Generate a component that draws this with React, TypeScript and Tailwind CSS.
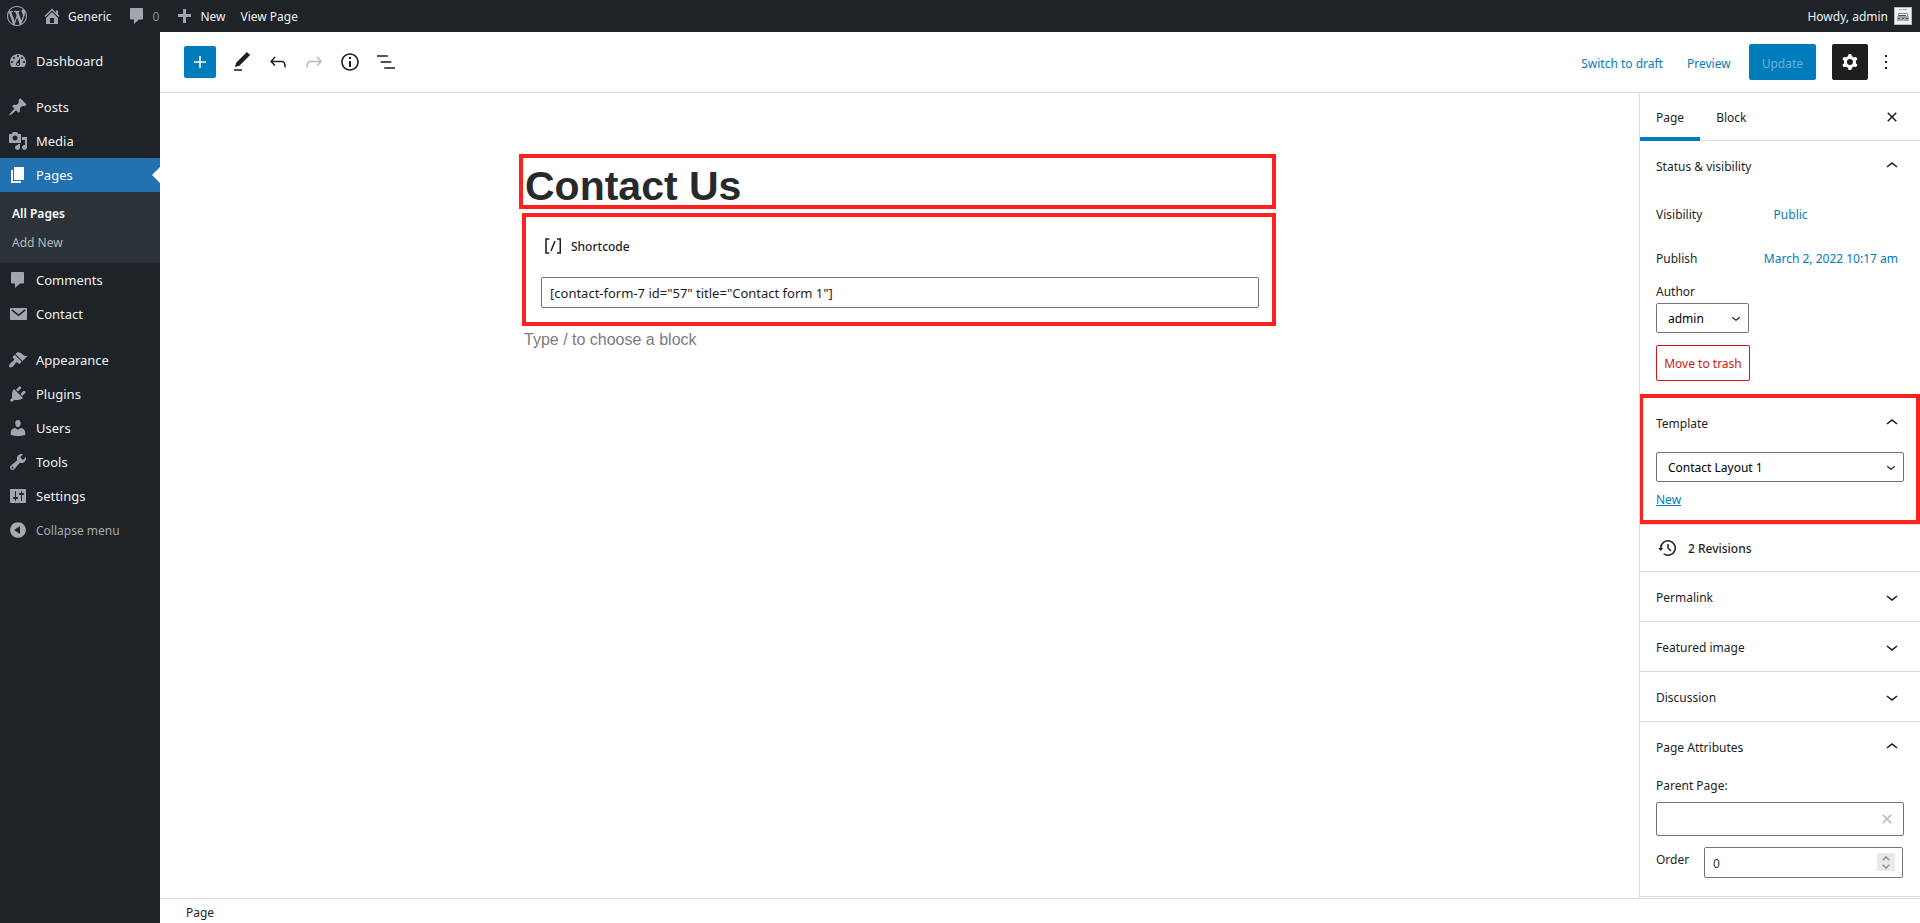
import type { ReactNode } from "react";

const dash = {
  wordpress:
    "M20 10c0-5.51-4.49-10-10-10C4.48 0 0 4.49 0 10c0 5.52 4.48 10 10 10 5.51 0 10-4.48 10-10zM7.78 15.37L4.37 6.22c.55-.02 1.17-.08 1.17-.08.5-.06.44-1.13-.06-1.11 0 0-1.45.11-2.37.11-.18 0-.37 0-.58-.01C4.12 2.69 6.87 1.11 10 1.11c2.33 0 4.45.87 6.05 2.34-.68-.11-1.65.39-1.65 1.58 0 .74.45 1.36.9 2.1.35.61.55 1.36.55 2.46 0 1.49-1.4 5-1.4 5l-3.03-8.37c.54-.02.82-.17.82-.17.5-.05.44-1.25-.06-1.22 0 0-1.44.12-2.38.12-.87 0-2.33-.12-2.33-.12-.5-.03-.56 1.2-.06 1.22l.92.08 1.26 3.41zM17.41 10c.24-.64.74-1.87.43-4.25.7 1.29 1.05 2.71 1.05 4.25 0 3.29-1.73 6.24-4.4 7.78.97-2.59 1.94-5.2 2.92-7.78zM6.1 18.09C3.12 16.65 1.11 13.53 1.11 10c0-1.3.23-2.48.72-3.59C3.25 10.3 4.67 14.2 6.1 18.09zm4.03-6.63l2.58 6.98c-.86.29-1.76.45-2.71.45-.79 0-1.57-.11-2.29-.33.81-2.38 1.62-4.74 2.42-7.1z",
  home: "M16 8.5l1.53 1.53-1.06 1.06L10 4.6l-6.47 6.49-1.06-1.06L10 2.5l4 4v-2h2v4zm-6-2.46l6 5.99V18H4v-5.97zM12 17v-5H8v5h4z",
  comments: "M4 2h11c.6 0 1 .4 1 1v9.500c0 .6-.4 1-1 1h-3L7 18v-4.500H4c-.6 0-1-.4-1-1V3c0-.6.4-1 1-1z",
  plus: "M17 8v3h-5v6H9v-6H4V8h5V3h3v5h5z",
  dashboard:
    "M3.76 16h12.48c1.1-1.37 1.76-3.11 1.76-5 0-4.42-3.58-8-8-8s-8 3.58-8 8c0 1.89.66 3.63 1.76 5zM10 4c.55 0 1 .45 1 1s-.45 1-1 1-1-.45-1-1 .45-1 1-1zM6 6c.55 0 1 .45 1 1s-.45 1-1 1-1-.45-1-1 .45-1 1-1zm8 0c.55 0 1 .45 1 1s-.45 1-1 1-1-.45-1-1 .45-1 1-1zm-5.37 5.55L12 7v6c0 1.1-.9 2-2 2s-2-.9-2-2c0-.57.24-1.08.63-1.45zM4 10c.55 0 1 .45 1 1s-.45 1-1 1-1-.45-1-1 .45-1 1-1zm12 0c.55 0 1 .45 1 1s-.45 1-1 1-1-.45-1-1 .45-1 1-1zm-5 3c0-.55-.45-1-1-1s-1 .45-1 1 .45 1 1 1 1-.45 1-1z",
  posts:
    "M10.44 3.02l1.82-1.82 6.36 6.35-1.83 1.82c-1.05-.68-2.48-.57-3.41.36l-.75.75c-.92.93-1.04 2.35-.35 3.41l-1.83 1.82-2.41-2.41-2.8 2.79c-.42.42-3.38 2.71-3.8 2.29s1.86-3.39 2.28-3.81l2.79-2.79L4.1 9.36l1.83-1.82c1.05.69 2.48.57 3.4-.36l.75-.75c.93-.92 1.05-2.35.36-3.41z",
  media:
    "M13 11V4c0-.55-.45-1-1-1h-1.67L9 1H5L3.67 3H2c-.55 0-1 .45-1 1v7c0 .55.45 1 1 1h10c.55 0 1-.45 1-1zM7 4.5c1.38 0 2.5 1.12 2.5 2.5S8.38 9.5 7 9.5 4.5 8.38 4.5 7 5.62 4.5 7 4.5zM14 6h5v10.5c0 1.38-1.12 2.5-2.5 2.5S14 17.88 14 16.5s1.12-2.5 2.5-2.5c.17 0 .34.02.5.05V9h-3V6zm-4 8.05V13h2v3.5c0 1.38-1.12 2.5-2.5 2.5S7 17.88 7 16.5 8.12 14 9.5 14c.17 0 .34.02.5.05z",
  pages: "M6 15V2h10v13H6zm-1 1h8v2H3V5h2v11z",
  email:
    "M3 4h15c.6 0 1 .4 1 1v10c0 .6-.4 1-1 1H3c-.6 0-1-.4-1-1V5c0-.6.4-1 1-1zm7.500 8.200L17.700 6.400 16.700 5.200 10.500 10.200 4.300 5.200 3.300 6.400z",
  appearance:
    "M14.48 11.06L7.41 3.99l1.5-1.5c.5-.56 2.3-.47 3.51.32 1.21.8 1.43 1.28 2.91 2.1 1.18.64 2.45 1.26 4.45.85zm-.71.71L6.7 4.7 4.93 6.47c-.39.39-.39 1.02 0 1.41l1.06 1.06c.39.39.39 1.03 0 1.42-.6.6-1.43 1.11-2.21 1.69-.35.26-.7.53-1.01.84C1.43 14.23.4 16.08 1.4 17.07c.99 1 2.84-.03 4.18-1.36.31-.31.58-.66.85-1.02.57-.78 1.08-1.61 1.69-2.21.39-.39 1.02-.39 1.41 0l1.06 1.06c.39.39 1.02.39 1.41 0z",
  plugins:
    "M13.11 4.36L9.87 7.6 8 5.73l3.24-3.24c.35-.34 1.05-.2 1.56.32.52.51.66 1.21.31 1.55zm-8 1.77l.91-1.12 9.01 9.01-1.19.84c-.71.71-2.63 1.16-3.82 1.16H6.14L4.9 17.26c-.59.59-1.54.59-2.12 0-.59-.58-.59-1.53 0-2.12l1.24-1.24v-3.88c0-1.13.4-3.19 1.09-3.89zm7.26 3.97l3.24-3.24c.34-.35 1.04-.21 1.55.31.52.51.66 1.21.31 1.55l-3.24 3.25z",
  users:
    "M10 9.25c-2.27 0-2.73-3.44-2.73-3.44C7 4.02 7.82 2 9.97 2c2.16 0 2.98 2.02 2.71 3.81 0 0-.41 3.44-2.68 3.44zm0 2.57L12.72 10c2.39 0 4.52 2.33 4.52 4.53v2.49s-3.65 1.13-7.24 1.13c-3.65 0-7.24-1.13-7.24-1.13v-2.49c0-2.25 1.94-4.48 4.47-4.48z",
  tools:
    "M16.68 9.77c-1.34 1.34-3.3 1.67-4.95.99l-5.41 6.52c-.99.99-2.59.99-3.58 0s-.99-2.59 0-3.57l6.52-5.42c-.68-1.65-.35-3.61.99-4.95 1.28-1.28 3.12-1.62 4.72-1.06l-2.89 2.89 2.82 2.82 2.86-2.87c.53 1.58.18 3.39-1.08 4.65zM3.81 16.21c.4.39 1.04.39 1.43 0 .4-.4.4-1.04 0-1.43-.39-.4-1.03-.4-1.43 0-.39.39-.39 1.03 0 1.43z",
  settings:
    "M18 16V4c0-.55-.45-1-1-1H3c-.55 0-1 .45-1 1v12c0 .55.45 1 1 1h14c.55 0 1-.45 1-1zM8 11h1c.55 0 1 .45 1 1s-.45 1-1 1H8v1.5c0 .28-.22.5-.5.5s-.5-.22-.5-.5V13H6c-.55 0-1-.45-1-1s.45-1 1-1h1V5.5c0-.28.22-.5.5-.5s.5.22.5.5V11zm5-2h-1c-.55 0-1-.45-1-1s.45-1 1-1h1V5.5c0-.28.22-.5.5-.5s.5.22.5.5V7h1c.55 0 1 .45 1 1s-.45 1-1 1h-1v5.5c0 .28-.22.5-.5.5s-.5-.22-.5-.5V9z",
  collapse:
    "M10 2.160c4.330 0 7.840 3.510 7.840 7.840s-3.510 7.840-7.840 7.840S2.160 14.330 2.160 10 5.670 2.160 10 2.160zm2 11.720V6.120L6.180 10z",
};

const block = {
  plus: "M18 11.2h-5.2V6h-1.6v5.2H6v1.6h5.2V18h1.6v-5.2H18z",
  edit: "M20.1 5.1L16.9 2 6.2 12.7l-1.3 4.4 4.5-1.3L20.1 5.1zM4 20.8h8v-1.5H4v1.5z",
  undo: "M18.3 11.7c-.6-.6-1.4-.9-2.3-.9H6.7l2.9-3.3-1.1-1-4.5 5L8.500 16l1-1-2.7-2.7H16c.5 0 .9.2 1.3.5 1 1 1 3.400 1 4.500v.3h1.5v-.2c0-1.500 0-4.300-1.500-5.700z",
  redo: "M15.600 6.500l-1.100 1 2.900 3.300H8c-.9 0-1.700.3-2.300.9-1.400 1.500-1.400 4.200-1.400 5.600v.2h1.500v-.3c0-1.100 0-3.500 1-4.500.3-.3.7-.5 1.300-.5h9.200L14.500 15l1.100 1.100 4.600-4.600-4.600-5z",
  info: "M12 3.200c-4.800 0-8.800 3.900-8.800 8.800 0 4.800 3.900 8.800 8.800 8.800 4.800 0 8.800-3.900 8.800-8.800 0-4.800-4-8.800-8.800-8.800zm0 16c-4 0-7.200-3.300-7.200-7.200C4.800 8 8 4.800 12 4.800s7.200 3.300 7.200 7.200c0 4-3.200 7.200-7.200 7.200zM11 17h2v-6h-2v6zm0-8h2V7h-2v2z",
  list: "M13.800 5.200H3v1.500h10.800V5.200zm-3.600 12v1.500H21v-1.500H10.200zm7.200-6H6.600v1.500h10.800v-1.500z",
  cog: "M10.289 4.836A1 1 0 0111.275 4h1.306a1 1 0 01.987.836l.244 1.466c.787.26 1.503.679 2.108 1.218l1.393-.522a1 1 0 011.216.437l.653 1.130a1 1 0 01-.23 1.273l-1.148.944a6.025 6.025 0 010 2.435l1.149.946a1 1 0 01.23 1.272l-.653 1.130a1 1 0 01-1.216.437l-1.394-.522c-.605.540-1.320.958-2.108 1.218l-.244 1.466a1 1 0 01-.987.836h-1.306a1 1 0 01-.986-.836l-.244-1.466a5.995 5.995 0 01-2.108-1.218l-1.394.522a1 1 0 01-1.217-.436l-.653-1.131a1 1 0 01.23-1.272l1.149-.946a6.026 6.026 0 010-2.435l-1.148-.944a1 1 0 01-.23-1.272l.653-1.131a1 1 0 011.217-.437l1.393.522a5.994 5.994 0 012.108-1.218l.244-1.466zM14.929 12a3 3 0 11-6 0 3 3 0 016 0z",
  more: "M13 19h-2v-2h2v2zm0-6h-2v-2h2v2zm0-6h-2V5h2v2z",
  close:
    "M12 13.060l3.712 3.713 1.061-1.060L13.061 12l3.712-3.712-1.060-1.060L12 10.938 8.288 7.227l-1.061 1.060L10.939 12l-3.712 3.712 1.060 1.061L12 13.061z",
  up: "M6.500 12.400L12 8l5.500 4.400-.9 1.200L12 10l-4.500 3.600-1-1.200z",
  down: "M17.500 11.600L12 16l-5.500-4.400.9-1.200L12 14l4.500-3.600 1 1.200z",
  backup:
    "M5.500 12h1.750l-2.500 3-2.500-3H4a8 8 0 113.134 6.350l.907-1.194A6.500 6.500 0 105.500 12zm9.530 1.970l-2.280-2.280V8.500a.75.75 0 00-1.500 0V12a.747.747 0 00.218.529l2.502 2.502a.75.75 0 101.060-1.061z",
  shortcode:
    "M16 4.200v1.500h2.500v12.500H16v1.500h4V4.200h-4zM4.200 19.800h4v-1.500H5.800V5.800h2.500V4.200h-4l-.1 15.600zm5.100-3.100l1.400.6 4-10-1.400-.6-4 10z",
};

function DashIcon({ name, className = "size-5" }: { name: keyof typeof dash; className?: string }) {
  return (
    <svg viewBox="0 0 20 20" fill="currentColor" fillRule="evenodd" aria-hidden="true" className={`shrink-0 ${className}`}>
      <path d={dash[name]} />
    </svg>
  );
}

function BlockIcon({ name, className = "size-6" }: { name: keyof typeof block; className?: string }) {
  return (
    <svg viewBox="0 0 24 24" fill="currentColor" fillRule="evenodd" aria-hidden="true" className={`shrink-0 ${className}`}>
      <path d={block[name]} />
    </svg>
  );
}

/* Text set beside an icon, seated just below the icon's centre line. */
function Label({ children }: { children: ReactNode }) {
  return <span className="pt-0.5">{children}</span>;
}

function AdminBar() {
  return (
    <header className="flex h-8 shrink-0 items-center bg-[#1d2327] pr-2 pl-[7px] text-xs text-[#f0f0f1]">
      <div className="flex items-center gap-[15px]">
        <a href="#about" aria-label="About WordPress" className="text-[#a0a6ab]">
          <DashIcon name="wordpress" />
        </a>
        <a href="#site" className="flex items-center gap-1.5">
          <DashIcon name="home" className="size-5 text-[#a0a6ab]" />
          <Label>Generic</Label>
        </a>
        <a href="#comments" className="flex items-center gap-1.5 text-[#8c9196]">
          <DashIcon name="comments" className="size-5 text-[#a0a6ab]" />
          <Label>0</Label>
        </a>
        <a href="#new" className="flex items-center gap-1.5">
          <DashIcon name="plus" className="size-5 text-[#a0a6ab]" />
          <Label>New</Label>
        </a>
        <a href="#view" className="flex">
          <Label>View Page</Label>
        </a>
      </div>
      <a href="#profile" className="ml-auto flex items-center gap-1.5">
        <Label>Howdy, admin</Label>
        <svg viewBox="0 0 18 18" className="size-[18px]" aria-hidden="true">
          <rect width="18" height="18" fill="#b4b9be" />
          <rect x="1" y="1" width="16" height="16" fill="#f3f3f3" />
          <path d="M5 2.500h4" stroke="#e8b48c" />
          <path d="M9 2.500h4" stroke="#7fb2d8" />
          <path d="M4.500 10V6.500h9V10" fill="none" stroke="#8b8f92" />
          <path d="M3 9h12v5H3z" fill="#a4a7aa" />
          <path d="M5 8.500h7M4 11.500h2m2 0h2m2 0h2" stroke="#4d5154" />
          <path d="M9 10.500h3" stroke="#5b9fd0" />
        </svg>
      </a>
    </header>
  );
}

function MenuItem({ icon, label }: { icon: keyof typeof dash; label: string }) {
  return (
    <li>
      <a href={`#${label.toLowerCase()}`} className="flex h-[34px] items-center gap-2 pl-2 text-[#f0f0f1]">
        <DashIcon name={icon} className="size-5 text-[#a0a6ab]" />
        <Label>{label}</Label>
      </a>
    </li>
  );
}

function AdminMenu() {
  return (
    <nav aria-label="Main menu" className="w-40 shrink-0 bg-[#1d2327] pt-3 text-[13px]">
      <ul>
        <MenuItem icon="dashboard" label="Dashboard" />
      </ul>
      <ul className="mt-3">
        <MenuItem icon="posts" label="Posts" />
        <MenuItem icon="media" label="Media" />
        <li>
          <a href="#pages" aria-current="page" className="relative flex h-[34px] items-center gap-2 bg-[#2271b1] pl-2 text-white">
            <DashIcon name="pages" />
            <Label>Pages</Label>
            <span className="absolute top-1/2 right-0 -translate-y-1/2 border-y-8 border-r-8 border-y-transparent border-r-white" />
          </a>
          <ul className="bg-[#2c3338] pt-[7px] pb-1.5 pl-3 text-xs">
            <li>
              <a href="#all-pages" className="flex h-[29px] items-center font-semibold text-white">
                All Pages
              </a>
            </li>
            <li>
              <a href="#add-new" className="flex h-[29px] items-center text-[#b4b9be]">
                Add New
              </a>
            </li>
          </ul>
        </li>
        <MenuItem icon="comments" label="Comments" />
        <MenuItem icon="email" label="Contact" />
      </ul>
      <ul className="mt-3">
        <MenuItem icon="appearance" label="Appearance" />
        <MenuItem icon="plugins" label="Plugins" />
        <MenuItem icon="users" label="Users" />
        <MenuItem icon="tools" label="Tools" />
        <MenuItem icon="settings" label="Settings" />
      </ul>
      <button type="button" className="flex h-[34px] w-full items-center gap-2 pl-2 text-xs text-[#a7aaad]">
        <DashIcon name="collapse" />
        <Label>Collapse menu</Label>
      </button>
    </nav>
  );
}

function ToolButton({ icon, label, disabled }: { icon: keyof typeof block; label: string; disabled?: boolean }) {
  return (
    <button type="button" aria-label={label} disabled={disabled} className="flex size-9 items-center justify-center disabled:opacity-30">
      <BlockIcon name={icon} />
    </button>
  );
}

function EditorHeader() {
  return (
    <div className="flex h-[61px] shrink-0 items-center justify-between border-b border-[#ddd] pr-4 pl-6">
      <div className="flex items-center">
        <button type="button" aria-label="Add block" className="mr-2 flex size-8 items-center justify-center rounded-xs bg-[#007cba] text-white">
          <BlockIcon name="plus" />
        </button>
        <ToolButton icon="edit" label="Tools" />
        <ToolButton icon="undo" label="Undo" />
        <ToolButton icon="redo" label="Redo" disabled />
        <ToolButton icon="info" label="Details" />
        <ToolButton icon="list" label="List view" />
      </div>
      <div className="flex items-center">
        <button type="button" className="mr-6 pt-[3px] text-[#007cba]">
          Switch to draft
        </button>
        <button type="button" className="mr-[18px] pt-[3px] text-[#007cba]">
          Preview
        </button>
        <button type="button" disabled className="mr-4 h-9 rounded-xs bg-[#007cba] px-[13px] pt-[3px] text-[#66b0d6]">
          Update
        </button>
        <button type="button" aria-label="Settings" className="flex size-9 items-center justify-center rounded-xs bg-[#1e1e1e] text-white">
          <BlockIcon name="cog" />
        </button>
        <ToolButton icon="more" label="Options" />
      </div>
    </div>
  );
}

function Canvas() {
  return (
    <main className="min-w-0 flex-1 overflow-auto pt-[61px] pr-1">
      <div className="mx-auto max-w-[757px]">
        <h1 className="flex h-[55px] items-center border-4 border-[#ff2020] pt-2.5 pl-0.5 font-['Liberation_Sans',Arial,sans-serif] text-[41px] leading-none font-bold text-[#28292b]">
          Contact Us
        </h1>
        <section className="mt-1 ml-[3px] border-4 border-[#ff2020] pt-[17px] pr-[13px] pb-[14px] pl-[15px]">
          <label htmlFor="shortcode" className="flex h-6 items-center gap-1.5 text-xs font-medium">
            <BlockIcon name="shortcode" />
            <Label>Shortcode</Label>
          </label>
          <input
            id="shortcode"
            defaultValue={'[contact-form-7 id="57" title="Contact form 1"]'}
            className="mt-[19px] h-[31px] w-full rounded-xs border border-[#757575] px-2 text-[13px]"
          />
        </section>
        <p className="mt-0.5 pl-[5px] font-['Liberation_Sans',Arial,sans-serif] text-base text-[#7c7c7c]">
          Type / to choose a block
        </p>
      </div>
    </main>
  );
}

function PanelTitle({ open, children }: { open?: boolean; children: ReactNode }) {
  return (
    <button type="button" aria-expanded={!!open} className="flex h-[49px] w-full items-center justify-between text-left">
      <span className="pt-[3px]">{children}</span>
      <BlockIcon name={open ? "up" : "down"} />
    </button>
  );
}

function ClosedPanel({ title }: { title: string }) {
  return (
    <h2 className="border-b border-[#ddd] px-4">
      <PanelTitle>{title}</PanelTitle>
    </h2>
  );
}

function Dropdown({ id, value, className }: { id: string; value: string; className: string }) {
  return (
    <div className={`relative ${className}`}>
      <select id={id} aria-label={id} defaultValue={value} className="h-[30px] w-full appearance-none rounded-xs border border-[#757575] bg-white pt-0.5 pl-[11px] text-black">
        <option>{value}</option>
      </select>
      <BlockIcon name="down" className="pointer-events-none absolute top-1.5 right-1 size-[18px]" />
    </div>
  );
}

function SettingsSidebar() {
  return (
    <aside aria-label="Settings" className="w-[281px] shrink-0 overflow-hidden border-l border-[#ddd]">
      <div className="flex h-12 items-center border-b border-[#ddd] pr-4">
        <button type="button" className="h-12 self-start border-b-4 border-[#007cba] px-4 pt-1.5">
          Page
        </button>
        <button type="button" className="h-12 px-4 pt-0.5">
          Block
        </button>
        <button type="button" aria-label="Close settings" className="ml-auto">
          <BlockIcon name="close" />
        </button>
      </div>

      <section className="px-4 pb-[13px]">
        <h2>
          <PanelTitle open>Status &amp; visibility</PanelTitle>
        </h2>
        <div className="mt-[7px] flex h-9 items-center">
          <span className="w-[45%]">Visibility</span>
          <button type="button" className="px-1.5 text-[#007cba]">
            Public
          </button>
        </div>
        <div className="mt-2 flex h-9 items-center justify-between">
          <span>Publish</span>
          <button type="button" className="px-1.5 text-[#007cba]">
            March 2, 2022 10:17 am
          </button>
        </div>
        <label htmlFor="author" className="mt-[5px] mb-px block leading-5">
          Author
        </label>
        <Dropdown id="author" value="admin" className="w-[93px]" />
        <button type="button" className="mt-3 h-9 w-[94px] rounded-xs border border-[#cc1818] pt-0.5 text-[#cc1818]">
          Move to trash
        </button>
      </section>

      <section className="-ml-px border-4 border-[#ff2020] pr-3 pb-2.5 pl-[13px]">
        <h2>
          <PanelTitle open>Template</PanelTitle>
        </h2>
        <Dropdown id="template" value="Contact Layout 1" className="mt-[5px] w-full" />
        <a href="#new-template" className="mt-2 block leading-5 text-[#007cba] underline">
          New
        </a>
      </section>

      <a href="#revisions" className="flex h-12 items-center gap-2 border-y border-[#ddd] px-4 font-medium">
        <BlockIcon name="backup" />
        <Label>2 Revisions</Label>
      </a>
      <ClosedPanel title="Permalink" />
      <ClosedPanel title="Featured image" />
      <ClosedPanel title="Discussion" />

      <section className="border-b border-[#ddd] px-4 pb-[18px]">
        <h2>
          <PanelTitle open>Page Attributes</PanelTitle>
        </h2>
        <label htmlFor="parent" className="mt-[5px] block leading-5">
          Parent Page:
        </label>
        <div className="relative mt-1.5">
          <input id="parent" className="block h-[34px] w-full rounded-xs border border-[#757575] px-2" />
          <button type="button" aria-label="Clear parent page" className="absolute top-[5px] right-[5px] text-[#b8b8b8]">
            <BlockIcon name="close" />
          </button>
        </div>
        <div className="mt-[11px] flex pr-px">
          <label htmlFor="order" className="w-12 pt-[3px] leading-5">
            Order
          </label>
          <div className="relative flex-1">
            <input
              id="order"
              inputMode="numeric"
              defaultValue="0"
              className="block h-[31px] w-full rounded-xs border border-[#757575] px-2 pt-0.5 text-[#2c3338]"
            />
            <div className="absolute top-1.5 right-2 flex size-[18px] flex-col items-center justify-center gap-[3px] bg-[#e9e9ed] text-[#8f8f9d]">
              <button type="button" aria-label="Increase order">
                <svg viewBox="0 0 8 5" className="h-[5px] w-2" fill="none" stroke="currentColor" strokeWidth="1.5" aria-hidden="true">
                  <path d="M.7 4.300L4 1l3.300 3.300" />
                </svg>
              </button>
              <button type="button" aria-label="Decrease order">
                <svg viewBox="0 0 8 5" className="h-[5px] w-2" fill="none" stroke="currentColor" strokeWidth="1.5" aria-hidden="true">
                  <path d="M.7.7L4 4 7.300.7" />
                </svg>
              </button>
            </div>
          </div>
        </div>
      </section>
    </aside>
  );
}

export default function App() {
  return (
    <div className="flex h-screen flex-col bg-white font-['Noto_Sans','Open_Sans',sans-serif] text-xs text-[#1e1e1e] [&_button]:[&_svg]:block">
      <AdminBar />
      <div className="flex min-h-0 flex-1">
        <AdminMenu />
        <div className="flex min-w-0 flex-1 flex-col">
          <EditorHeader />
          <div className="flex min-h-0 flex-1">
            <Canvas />
            <SettingsSidebar />
          </div>
          <footer className="flex h-[25px] shrink-0 items-center border-t border-[#ddd] pt-[3px] pl-[26px]">Page</footer>
        </div>
      </div>
    </div>
  );
}
